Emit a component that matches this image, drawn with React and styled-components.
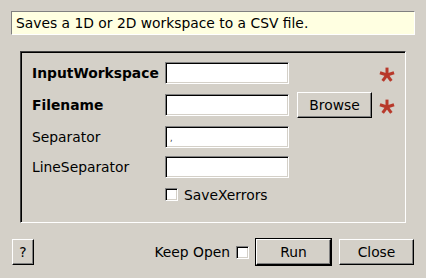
import React from "react";
import styled, { createGlobalStyle } from "styled-components";

const GlobalStyle = createGlobalStyle`
  html, body {
    margin: 0;
    padding: 0;
    background: #d4d0c8;
  }
  body {
    font-family: "DejaVu Sans", "Liberation Sans", sans-serif;
    font-size: 13.85px;
    color: #000;
  }
  * { box-sizing: border-box; }
`;

const Window = styled.div`
  width: 426px;
  height: 278px;
  padding: 11px 12px 0 11px;
  display: flex;
  flex-direction: column;
  background: #d4d0c8;
`;

const Description = styled.div`
  width: 404px;
  height: 24px;
  background: #ffffe1;
  border: 1px solid;
  border-color: #808080 #ffffff #ffffff #808080;
  padding-left: 4px;
  display: flex;
  align-items: center;
  white-space: nowrap;
`;

const Group = styled.div`
  margin-top: 16px;
  margin-left: 9px;
  width: 386px;
  height: 172px;
  border: 1px solid;
  border-color: #404040 #ffffff #ffffff #404040;
  box-shadow: inset 1px 1px 0 #000;
  padding: 8px 0 0 11px;
`;

const Form = styled.div`
  display: grid;
  grid-template-columns: 133px 124px 83px 23px;
  grid-template-rows: 26px 26px 26px 22px 23px;
  row-gap: 6px;
  align-items: center;
`;

const Label = styled.div`
  font-weight: ${(p) => (p.$bold ? "bold" : "normal")};
  white-space: nowrap;
  color: #000;
`;

const Input = styled.div`
  width: 124px;
  height: 22px;
  background: #fff;
  border: 1px solid;
  border-color: #808080 #ffffff #ffffff #808080;
  box-shadow: inset 1px 1px 0 #000, inset -1px -1px 0 #d4d0c8;
  padding: 0 4px;
  display: flex;
  align-items: center;
  font-size: 8px;
  line-height: 1;
  color: #333;
  padding-top: 4px;
`;

const Button = styled.button`
  font-family: "DejaVu Sans", "Liberation Sans", sans-serif;
  font-size: 13.85px;
  color: #000;
  width: ${(p) => p.$w}px;
  height: 26px;
  padding: 0;
  background: #d4d0c8;
  border: 1px solid;
  border-color: #ffffff #000 #000 #ffffff;
  box-shadow: inset -1px -1px 0 #808080;
  display: flex;
  align-items: center;
  justify-content: center;
  cursor: default;
`;

const DefaultButton = styled.div`
  border: 1px solid #000;
  display: flex;
`;

const BrowseButton = styled(Button)`
  justify-self: end;
`;

const StarCell = styled.div`
  justify-self: end;
  width: 16px;
  height: 16px;
  display: flex;
  align-items: center;
  justify-content: center;
  margin-top: 4px;
`;

const CheckRow = styled.div`
  grid-column: 2 / span 3;
  display: flex;
  align-items: center;
  gap: 6px;
  margin-top: -2px;
`;

const Box = styled.div`
  width: 13px;
  height: 13px;
  background: #fff;
  border: 1px solid;
  border-color: #808080 #ffffff #ffffff #808080;
  box-shadow: inset 1px 1px 0 #000, inset -1px -1px 0 #d4d0c8;
  flex: none;
`;

const Footer = styled.div`
  margin-top: 15px;
  height: 28px;
  padding-left: 1px;
  display: flex;
  align-items: center;
`;

const Spacer = styled.div`
  flex: 1;
`;

const KeepOpen = styled.div`
  display: flex;
  align-items: center;
  gap: 6px;
  margin-right: 6px;
  white-space: nowrap;
`;

const CloseWrap = styled.div`
  margin-left: 7px;
  display: flex;
`;

const Star = () => (
  <svg width="16" height="16" viewBox="-8 -8 16 16">
    {[-90, -18, 54, 126, 198].map((a) => {
      const r = (a * Math.PI) / 180;
      return (
        <line
          key={a}
          x1="0"
          y1="0"
          x2={(7.4 * Math.cos(r)).toFixed(2)}
          y2={(7.4 * Math.sin(r)).toFixed(2)}
          stroke="#b8392b"
          strokeWidth="3"
          strokeLinecap="butt"
        />
      );
    })}
  </svg>
);

export default function App() {
  return (
    <>
      <GlobalStyle />
      <Window>
        <Description>Saves a 1D or 2D workspace to a CSV file.</Description>
        <Group>
          <Form>
            <Label $bold>InputWorkspace</Label>
            <Input />
            <div />
            <StarCell>
              <Star />
            </StarCell>

            <Label $bold>Filename</Label>
            <Input />
            <BrowseButton $w={75}>Browse</BrowseButton>
            <StarCell>
              <Star />
            </StarCell>

            <Label>Separator</Label>
            <Input>,</Input>
            <div />
            <div />

            <Label>LineSeparator</Label>
            <Input />
            <div />
            <div />

            <div />
            <CheckRow>
              <Box />
              <span>SaveXerrors</span>
            </CheckRow>
          </Form>
        </Group>
        <Footer>
          <Button $w={22}>?</Button>
          <Spacer />
          <KeepOpen>
            <span>Keep Open</span>
            <Box />
          </KeepOpen>
          <DefaultButton>
            <Button $w={75}>Run</Button>
          </DefaultButton>
          <CloseWrap>
            <Button $w={75}>Close</Button>
          </CloseWrap>
        </Footer>
      </Window>
    </>
  );
}
